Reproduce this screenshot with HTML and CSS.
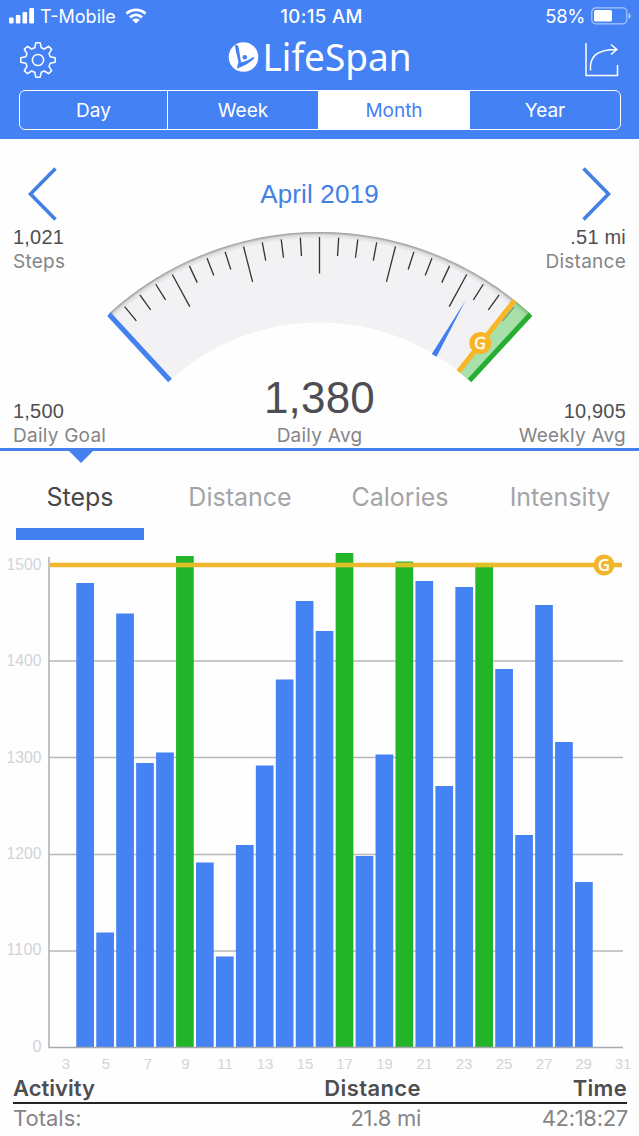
FILE: index.html
```html
<!DOCTYPE html>
<html lang="en">
<head>
<meta charset="utf-8">
<title>LifeSpan</title>
<link rel="stylesheet" href="styles.css">
</head>
<body>
<header class="header">
  <div class="status">
    <div class="carrier">
      <svg class="signal" width="26" height="16" viewBox="0 0 26 16"><rect x="0" y="9.5" width="4.6" height="6" rx="1"/><rect x="6.8" y="7" width="4.6" height="8.500" rx="1"/><rect x="13.500" y="4" width="4.600" height="11.500" rx="1"/><rect x="20.200" y="0" width="4.800" height="15.500" rx="1"/></svg>
      <span class="carrier-name">T-Mobile</span>
      <svg class="wifi" width="22" height="16" viewBox="0 0 22 16"><path d="M1.500 5.600C7 .6 15 .6 20.500 5.600M5 9.300c3.600-3.200 8.400-3.200 12 0" fill="none" stroke="#fff" stroke-width="2.900"/><path d="M7.200 11.800c2.300-1.800 5.300-1.800 7.600 0L11 15.600z" fill="#fff"/></svg>
    </div>
    <span class="clock">10:15 AM</span>
    <div class="power">
      <span class="percent">58%</span>
      <svg width="41" height="18" viewBox="0 0 41 18"><rect x=".8" y=".8" width="35" height="16" rx="4" fill="none" stroke="#a9c6fc" stroke-width="1.200"/><rect x="3" y="3" width="18" height="11.500" rx="1.500" fill="#fff"/><path d="M37.500 6v6c3-1 3-5 0-6z" fill="#a9c6fc"/></svg>
    </div>
  </div>
  <div class="titlebar">
    <svg class="gear" width="36" height="36" viewBox="-18 -18 36 36" fill="none" stroke="#fff" stroke-width="1.500" stroke-linejoin="round"><circle r="5.600"/><path d="M-3.300-12.200-2.200-17.200H2.200L3.300-12.200 6.300-11 10.600-13.700 13.700-10.600 11-6.300 12.200-3.300 17.200-2.200V2.200L12.200 3.300 11 6.300 13.700 10.600 10.600 13.700 6.300 11 3.300 12.200 2.200 17.200H-2.200L-3.300 12.200-6.300 11-10.600 13.700-13.700 10.600-11 6.300-12.200 3.300-17.200 2.200V-2.200L-12.200-3.300-11-6.300-13.700-10.600-10.600-13.700-6.300-11z"/></svg>
    <svg class="brand" width="192" height="66" viewBox="-2 -12 192 66"><circle cx="17.500" cy="19" r="14.800" fill="#fff"/><g fill="#4380f3"><path d="M9 7.500c1.800-1.400 3.200-.2 3.700 2L15 24.500c4.500-1 8-2.700 12.200-5.500 1.100 0 1.300 1 .6 1.700C24 24.500 19 27.500 11 30.500c.3-3 1.200-5 1.500-6.500C11.500 18.500 9.500 13 9 7.500z"/><circle cx="18.800" cy="19.300" r="2.300"/></g><text class="brand-text" x="36.500" y="33" textLength="149" lengthAdjust="spacingAndGlyphs">LifeSpan</text></svg>
    <svg class="share" width="36" height="36" viewBox="0 0 36 36" fill="none" stroke="#fff" stroke-width="1.500"><path d="M2 1v32.500H33.500V23M6.500 28.500C5.500 15 12 7.500 32.500 7.500M27 2.500l5.800 5-5.800 5"/></svg>
  </div>
  <nav class="segments">
    <span class="segment">Day</span>
    <span class="segment">Week</span>
    <span class="segment segment-active">Month</span>
    <span class="segment">Year</span>
  </nav>
</header>
<main>
  <section class="summary">
    <div class="period">
      <svg width="30" height="54" viewBox="0 0 30 54" class="chevron"><path d="M28.500 1.500 3.500 27 28.500 52.500"/></svg>
      <span class="period-name">April 2019</span>
      <svg width="30" height="54" viewBox="0 0 30 54" class="chevron"><path d="M1.500 1.500 26.500 27 1.500 52.500"/></svg>
    </div>
    <svg class="gauge" width="639" height="170" viewBox="0 225 639 170">
      <defs>
        <radialGradient id="rim" gradientUnits="userSpaceOnUse" cx="319.500" cy="544.500" r="312.500"><stop offset=".978" stop-color="#f2f1f3"/><stop offset=".991" stop-color="#dddcde"/><stop offset="1" stop-color="#989798"/></radialGradient>
      </defs>
      <path d="M108.400 314A312.500 312.500 0 0 1 530.600 314L469.500 380.800A222 222 0 0 0 169.500 380.800Z" fill="url(#rim)"/>
      <path d="M515 300.500L531 314L469.500 381L458.500 371.500Z" fill="#55cc55" fill-opacity=".48"/>
      <g id="ticks" stroke="#333" stroke-width="1.300"></g>
      <path d="M109 314.300 170 380.500" stroke="#4380f0" stroke-width="5"/>
      <path d="M530.500 314.300 469.500 380.500" stroke="#27ad32" stroke-width="5"/>
      <path d="M514.500 300.500 458.500 371.500" stroke="#f9b526" stroke-width="5"/>
      <circle cx="480.300" cy="343" r="11" fill="#f9b526"/>
      <text class="goal-mark" x="480.300" y="349" transform="rotate(8 480.300 343)">G</text>
      <path d="M465.500 300.500 431.800 354 436.500 356.800Z" fill="#3f7df0"/>
    </svg>
    <div class="stats">
      <div class="stat stat-nw"><span class="num">1,021</span><span class="label">Steps</span></div>
      <div class="stat stat-ne"><span class="num">.51 mi</span><span class="label">Distance</span></div>
      <div class="stat stat-sw"><span class="num">1,500</span><span class="label">Daily Goal</span></div>
      <div class="stat stat-mid"><span class="num num-big">1,380</span><span class="label">Daily Avg</span></div>
      <div class="stat stat-se"><span class="num">10,905</span><span class="label">Weekly Avg</span></div>
    </div>
  </section>
  <nav class="tabs">
    <span class="tab tab-active">Steps</span>
    <span class="tab">Distance</span>
    <span class="tab">Calories</span>
    <span class="tab">Intensity</span>
  </nav>
  <svg class="chart" id="chart" width="639" height="530" viewBox="0 545 639 530"></svg>
  <div class="table">
    <div class="row row-head"><span>Activity</span><span class="mid">Distance</span><span class="end">Time</span></div>
    <div class="row row-total"><span class="t-name">Totals:</span><span class="mid t-dist">21.8 mi</span><span class="end t-time">42:18:27</span></div>
  </div>
</main>
<script src="chart.js"></script>
</body>
</html>
```
FILE: styles.css
```css
* { box-sizing: border-box; }
body { margin: 0; width: 639px; height: 1136px; overflow: hidden; background: #fefefe; font-family: Inter, "Liberation Sans", sans-serif; color: #4e4e52; }
svg { display: block; flex: none; }
.header { height: 139px; background: #4481f4; color: #fff; }
.status { height: 32px; display: grid; grid-template-columns: 1fr auto 1fr; align-items: center; padding: 0 10px 0 9px; font-size: 18.500px; }
.carrier { display: flex; align-items: center; }
.signal { fill: #fff; }
.carrier-name { margin-left: 5px; width: 76px; white-space: nowrap; font-size: 18px; }
.wifi { margin-left: 9px; }
.clock { font-weight: 500; letter-spacing: .4px; margin-left: 5px; }
.percent { letter-spacing: -.4px; }
.power { display: flex; justify-content: flex-end; align-items: center; gap: 6px; margin-right: -3px; }
.titlebar { height: 58px; display: flex; justify-content: space-between; align-items: flex-start; padding: 10px 19px 0 20px; }
.brand { margin-top: -16px; }
.brand-text { font: 39px "Noto Sans", sans-serif; fill: #fff; }
.segments { display: grid; grid-template-columns: 147px 151px 151px 1fr; height: 40px; margin-left: 19px; width: 602px; border: 1.500px solid #fff; border-radius: 6px; overflow: hidden; }
.segment { display: flex; align-items: center; justify-content: center; font-size: 19px; border-left: 1.500px solid #fff; }
.segment:first-child { border-left: 0; }
.segment-active { background: #fff; color: #4481f4; }
.summary { height: 312px; border-bottom: 3px solid #4480ee; display: grid; grid-template-rows: 86px 1fr; }
.period { display: flex; justify-content: space-between; align-items: flex-start; padding: 28px 27px 0; }
.period-name { font: 26px/54px "Liberation Sans", sans-serif; letter-spacing: .15px; color: #4380e5; }
.chevron { fill: none; stroke: #4380e5; stroke-width: 3.600; }
.gauge, .stats { grid-row: 2; grid-column: 1; }
.period { grid-row: 1; grid-column: 1; }
.stats { display: grid; grid-template-columns: 1fr auto 1fr; grid-template-rows: 1fr auto; padding: 0 13px; }
.stat { display: flex; flex-direction: column; white-space: nowrap; }
.stat-ne, .stat-se { grid-column: 3; align-items: flex-end; }
.stat-nw, .stat-ne { grid-row: 1; }
.stat-sw { grid-column: 1; }
.stat-sw, .stat-mid, .stat-se { grid-row: 2; justify-content: flex-end; }
.stat-mid { grid-column: 2; align-items: center; }
.num { font: 20px/24px "Liberation Sans", sans-serif; letter-spacing: .2px; }
.num-big { font-size: 44px; line-height: 50px; }
.label { font-size: 19px; line-height: 25px; letter-spacing: .25px; color: #858587; }
.tabs { height: 94px; display: grid; grid-template-columns: repeat(4, 128px); column-gap: 32px; padding-left: 16px; position: relative; }
.tabs::before { content: ""; position: absolute; left: 69px; top: 0; border: 12px solid transparent; border-top-color: #4480ee; border-bottom: 0; }
.tab { height: 89px; padding-top: 31px; text-align: center; font-size: 25px; line-height: 30px; color: #a4a4a7; }
.tab-active { color: #48484a; border-bottom: 12px solid #4380f0; }
.chart { height: 530px; }
.goal-mark { font: 600 17px "Open Sans", sans-serif; fill: #fff; text-anchor: middle; }
.axis-y { font: 16px "Liberation Sans", sans-serif; fill: #d3d3da; text-anchor: end; }
.axis-x { font: 15px "Liberation Sans", sans-serif; fill: #d3d3d8; text-anchor: middle; }
.table { margin: 0 12px 0 13px; }
.row { display: grid; grid-template-columns: 204px 204px 1fr; }
.row-head { height: 29px; border-bottom: 2px solid #252527; font-weight: 600; font-size: 22px; line-height: 26px; }
.row-head .mid { letter-spacing: .4px; }
.row-head .end { letter-spacing: .3px; }
.row-total { font-size: 22px; line-height: 29px; color: #858587; }
.t-dist { letter-spacing: -.3px; }
.t-time { letter-spacing: -.3px; margin-right: -1px; }
.mid, .end { text-align: right; }
```
FILE: chart.js
```js
const NS = "http://www.w3.org/2000/svg";
function add(parent, tag, attrs, text) {
  const el = document.createElementNS(NS, tag);
  for (const k in attrs) el.setAttribute(k, attrs[k]);
  if (text !== undefined) el.textContent = text;
  parent.appendChild(el);
}

// Gauge ticks: every fourth one is long.
const ticks = document.getElementById("ticks");
for (let i = -11; i <= 11; i++) {
  const a = i * 3.575 * Math.PI / 180;
  const r = i % 4 === 0 ? 271 : 289;
  add(ticks, "line", {
    x1: 319.5 + 307.5 * Math.sin(a), y1: 544.5 - 307.5 * Math.cos(a),
    x2: 319.5 + r * Math.sin(a), y2: 544.5 - r * Math.cos(a),
    ...(i === 11 ? { stroke: "#6a9a6c" } : {})
  });
}

// Daily bars, day 4 to 29, as top edges on the chart.
const chart = document.getElementById("chart");
const tops = [583, 932.5, 613.5, 763, 752.5, 556, 862.5, 956.5, 845, 765.5, 679.500, 601, 631, 553, 856, 754.5, 561.5, 581, 786, 587, 567, 669, 835, 605, 742, 882];
const goalDays = [9, 17, 20, 24];
for (const y of [661, 757.5, 854.5, 951]) add(chart, "path", { d: `M49 ${y}H623`, stroke: "#b7b7bb", "stroke-width": 1.3 });
tops.forEach((y, i) => {
  const met = goalDays.includes(i + 4);
  add(chart, "rect", { x: 76.3 + i * 19.95, y, width: 17.7, height: 1048 - y, fill: met ? "#22b52a" : "#4582f3" });
});
add(chart, "path", { d: "M49 557V1047.5H623", fill: "none", stroke: "#a9a9b0", "stroke-width": 1.4 });
add(chart, "path", { d: "M50 565H622", stroke: "#f0b62e", "stroke-width": 4.3 });
for (const d of goalDays) add(chart, "rect", { x: 76.3 + (d - 4) * 19.95, y: 562.8, width: 17.7, height: 4.3, fill: "#dcc126" });
add(chart, "circle", { cx: 604, cy: 565, r: 10.5, fill: "#f0b62e" });
add(chart, "text", { x: 604, y: 571, class: "goal-mark" }, "G");
[[1500, 569.5], [1400, 665.5], [1300, 762.5], [1200, 858.5], [1100, 954.5], [0, 1051.5]].forEach(([v, y]) =>
  add(chart, "text", { x: 41.5, y, class: "axis-y", textLength: v ? 35 : 9, lengthAdjust: "spacingAndGlyphs" }, v));
[66, 106, 148, 185.5, 225, 265, 305, 344.5, 384.5, 424.5, 464, 504, 544, 583.5, 623].forEach((x, i) =>
  add(chart, "text", { x, y: 1069, class: "axis-x" }, 3 + 2 * i));
```
